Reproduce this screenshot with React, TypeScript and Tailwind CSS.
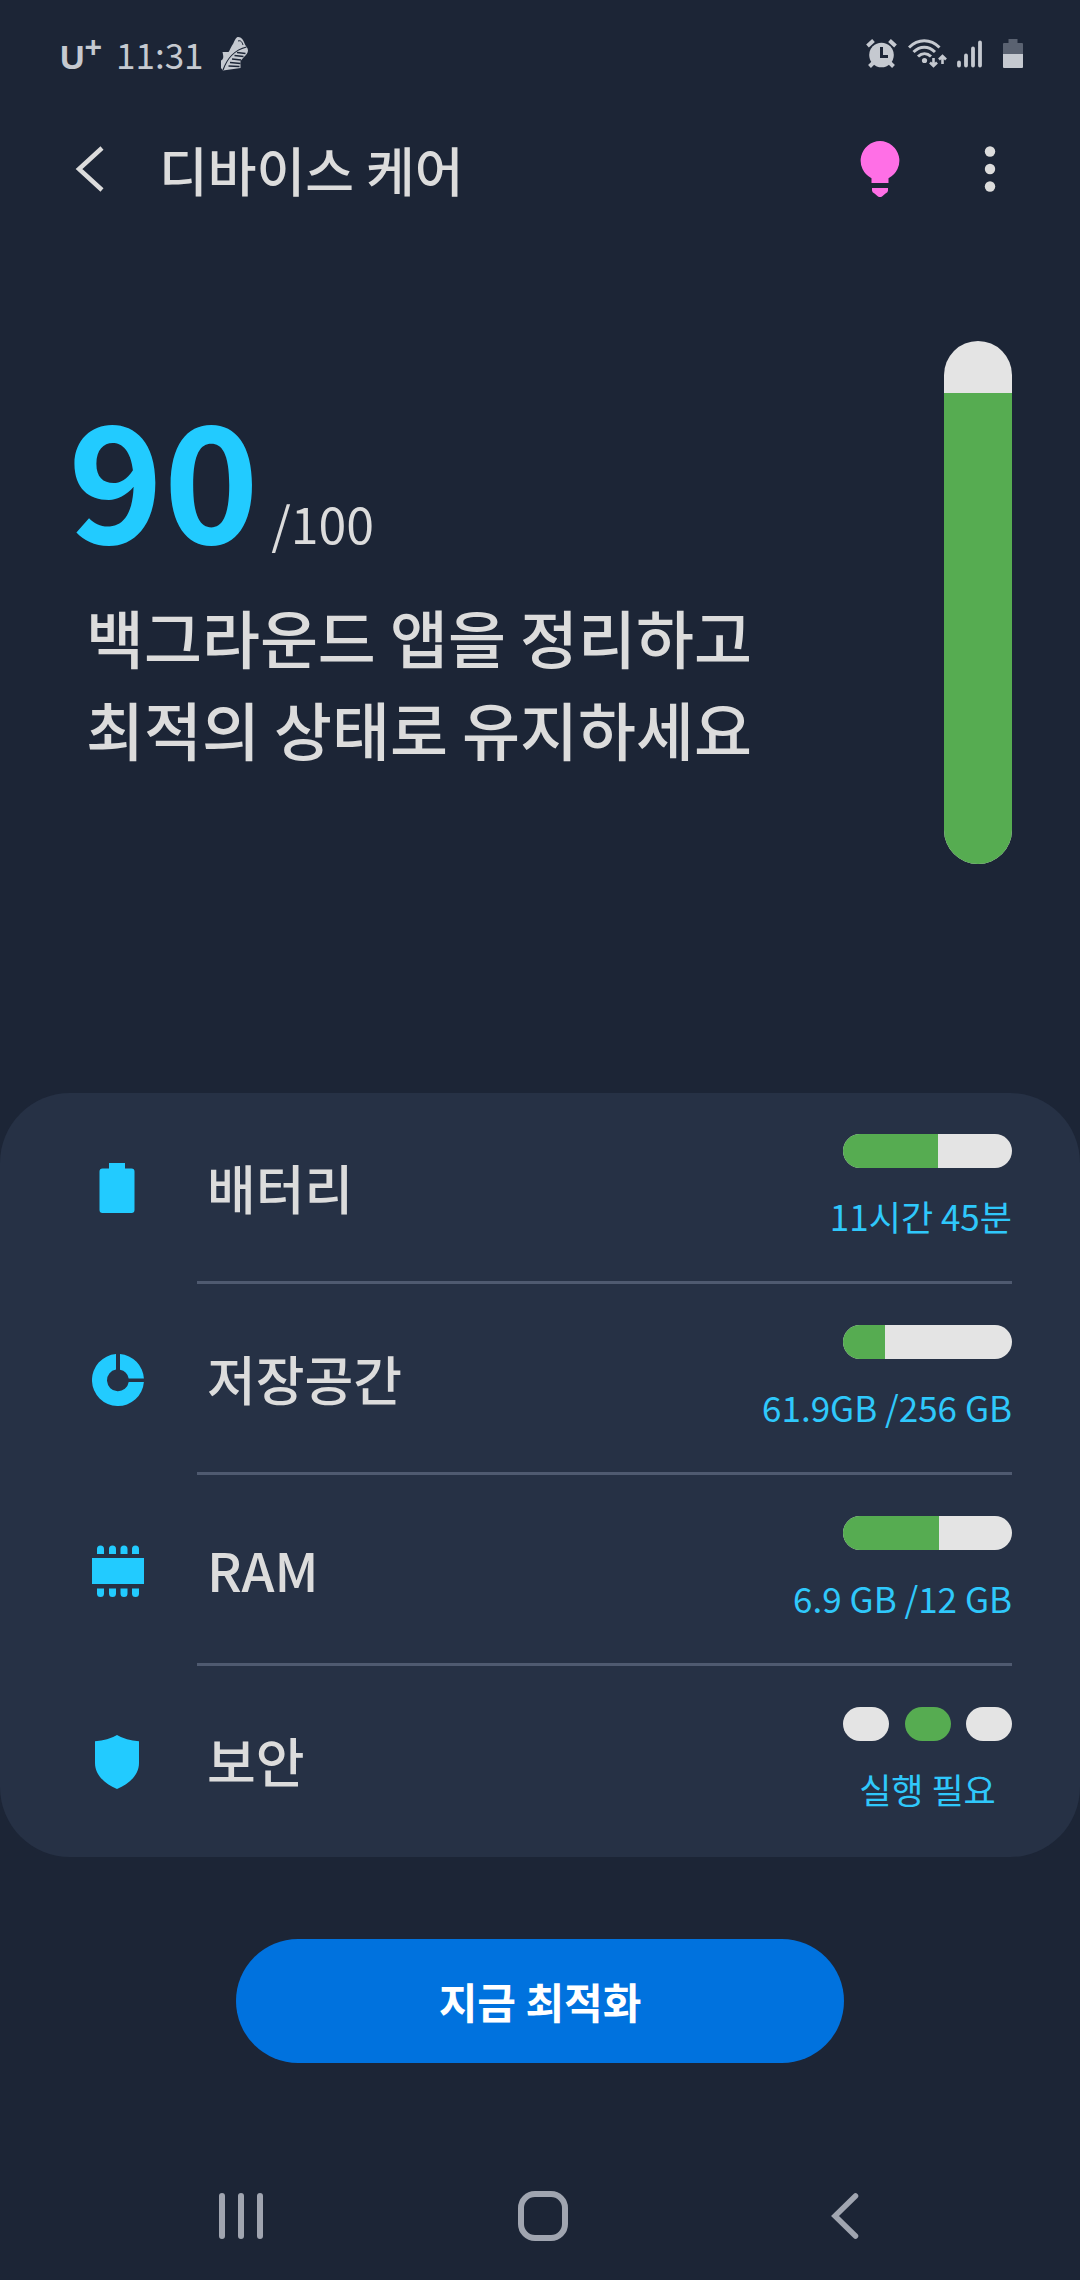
import React from 'react';

interface UsageBarProps {
  label: string;
  percent: number;
}

interface CareRowProps {
  icon: React.ReactNode;
  title: string;
  value: string;
  last?: boolean;
  children: React.ReactNode;
}

const AlarmIcon = () => (
  <svg width="32" height="30" viewBox="0 0 32 30" fill="none">
    <circle cx="15.5" cy="16" r="12.3" fill="#c5c9d0" />
    <path d="M1.5 7 7.5 1.5M29.5 7 23.5 1.5" stroke="#c5c9d0" strokeWidth="4" />
    <path d="m7 24-3.5 3.5M24 24l3.5 3.5" stroke="#c5c9d0" strokeWidth="4" />
    <path d="M15.5 8v9.5H22" stroke="#1c2536" strokeWidth="3" />
  </svg>
);

const WifiIcon = () => (
  <svg width="39" height="30" viewBox="0 0 39 30" fill="none" stroke="#c5c9d0" strokeWidth="3">
    <path d="M1 8.500C10 -.5 22.500 -.5 31.500 8.500" />
    <path d="M5.500 13C12 6.500 20.500 6.500 27 13" />
    <path d="M10 17.500c4-3.800 9-3.800 13 0" />
    <circle cx="16.500" cy="21.500" r="2.600" fill="#c5c9d0" stroke="none" />
    <path d="M25.500 19v8M22 23.500l3.500 3.500 3.500-3.500" strokeWidth="2.600" />
    <path d="M34.500 25v-8M31 20.500l3.500-3.500 3.500 3.500" strokeWidth="2.600" />
  </svg>
);

const SignalIcon = () => (
  <svg width="26" height="28" viewBox="0 0 26 28" stroke="#c5c9d0" strokeWidth="3.800" strokeLinecap="round">
    <path d="M2 22.500v3M9 15.500v10M16 8.500v17M23 2.500v23" />
  </svg>
);

const StatusBatteryIcon = () => (
  <svg width="20" height="30" viewBox="0 0 20 30">
    <path d="M5.500 0h9v4H19a1 1 0 0 1 1 1v10H0V5a1 1 0 0 1 1-1h4.500z" fill="#5a6271" />
    <path d="M0 15h20v13a1 1 0 0 1-1 1H1a1 1 0 0 1-1-1z" fill="#c5c9d0" />
  </svg>
);

const ShoeIcon = () => (
  <svg width="29" height="36" viewBox="0 0 29 36" fill="none">
    <path
      d="M17.500 1c3.500-.5 6 2.500 7.500 7.500 1 2 3 3.500 3 6 0 2.500-2 4.500-4 6.500l-3.500 4V32L3 34.500 1 32v-7.500c3-1.500 2.500-4 1.500-8.500h6c1-1 2-4 3.500-6.500C14 7 14.500 3 17.500 1z"
      fill="#c5c9d0"
    />
    <path d="M3 34C7 23 13 14.500 26.500 11" stroke="#1c2536" strokeWidth="1.200" />
    <path d="m17 16.500 8.500 1M14.500 19.500l9 1M12 23l9 1M10 26.500l10.500 1M8.500 30l11 .5" stroke="#1c2536" strokeWidth="1.300" />
    <path d="M18 5c3-1 4 1 5 4" stroke="#1c2536" strokeWidth="1" />
  </svg>
);

const BulbIcon = () => (
  <svg width="40" height="57" viewBox="0 0 40 57" fill="#ff6fe6">
    <path d="M20 0a19.700 19.700 0 0 1 8.500 37.300V42h-17v-4.700A19.700 19.700 0 0 1 20 0z" />
    <path d="M12 47h16v2.500q0 2-2.500 3L22 55.500q-2 1.200-4 0l-3.500-3Q12 51.500 12 49.500z" />
  </svg>
);

const MoreIcon = () => (
  <svg width="12" height="46" viewBox="0 0 12 46" fill="#dcdcdc">
    <circle cx="6" cy="5.500" r="5.200" />
    <circle cx="6" cy="23" r="5.200" />
    <circle cx="6" cy="40.500" r="5.200" />
  </svg>
);

const BatteryIcon = () => (
  <svg width="52" height="54" viewBox="0 0 52 54" fill="#22cbff">
    <path d="M17 1h16v5.500h6.500a3 3 0 0 1 3 3V48a3 3 0 0 1-3 3h-29a3 3 0 0 1-3-3V9.500a3 3 0 0 1 3-3H17z" />
  </svg>
);

const StorageIcon = () => (
  <svg width="52" height="54" viewBox="0 0 52 54" fill="#22cbff">
    <path d="M24 1.100V16.600A10.900 10.900 0 1 0 36.700 29H51.900A26 26 0 1 1 24 1.100z" />
    <path d="M28 1.100A26 26 0 0 1 51.900 25.500H36.700A11 11 0 0 0 28 16.800z" />
  </svg>
);

const RamIcon = () => (
  <svg width="52" height="54" viewBox="0 0 52 54" fill="#22cbff">
    <path d="M0 14h52v26H0z" />
    <path d="M5 10V5a3.500 3.500 0 0 1 7 0v5zM17 10V5a3.500 3.500 0 0 1 7 0v5zM28.500 10V5a3.500 3.500 0 0 1 7 0v5zM40 10V5a3.500 3.500 0 0 1 7 0v5z" />
    <path d="M5 44.500v5a3.500 3.500 0 0 0 7 0v-5zM17 44.500v5a3.500 3.500 0 0 0 7 0v-5zM28.500 44.500v5a3.500 3.500 0 0 0 7 0v-5zM40 44.500v5a3.500 3.500 0 0 0 7 0v-5z" />
  </svg>
);

const ShieldIcon = () => (
  <svg width="52" height="54" viewBox="0 0 52 54" fill="#22cbff">
    <path d="M25 0Q34 5.500 47 6.300V28C47 39.500 37.500 49 25 54 12.500 49 3 39.500 3 28V6.300Q16 5.500 25 0z" />
  </svg>
);

const UsageBar: React.FC<UsageBarProps> = ({ label, percent }) => (
  <div
    role="progressbar"
    aria-label={label}
    aria-valuenow={percent}
    className="h-[34px] w-full overflow-hidden rounded-full bg-[#e4e4e4]"
  >
    <div className="h-full bg-[#56ac51]" style={{ width: `${percent}%` }}></div>
  </div>
);

const CareRow: React.FC<CareRowProps> = ({ icon, title, value, last = false, children }) => (
  <li>
    <button type="button" className="flex w-full items-center gap-[53px] pr-[68px] pl-[92px] text-left">
      <span className="shrink-0">{icon}</span>
      <span
        className={`flex grow items-center justify-between border-b-3 pl-[10px] ${
          last ? 'border-transparent' : 'border-[#4f5a70]'
        }`}
      >
        <span className="text-[53px] leading-[72px] font-medium text-[#dcdcdc]">{title}</span>
        <span className="flex w-[169px] flex-col gap-[26px] pt-[41px] pb-[43px]">
          {children}
          <span
            className={`flex text-[35px] leading-[44px] whitespace-nowrap text-[#2fc8fb] ${
              last ? 'justify-center' : 'justify-end'
            }`}
          >
            {value}
          </span>
        </span>
      </span>
    </button>
  </li>
);

const App: React.FC = () => {
  return (
    <div className="flex min-h-screen flex-col bg-[#1c2536] font-['Noto_Sans_CJK_KR',sans-serif]">
      <div className="flex h-[108px] items-center justify-between pr-[57px] pl-[60px] text-[#c5c9d0]">
        <div className="flex items-center">
          <span className="flex items-start font-['Liberation_Sans',sans-serif] font-bold">
            <span className="pt-[6px] text-[34px] leading-[36px]">U</span>
            <span className="text-[30px] leading-[28px]">+</span>
          </span>
          <span className="ml-[14px] text-[35px] leading-[40px]">11:31</span>
          <span className="ml-4">
            <ShoeIcon />
          </span>
        </div>
        <div className="flex items-center">
          <AlarmIcon />
          <span className="ml-[10px]">
            <WifiIcon />
          </span>
          <span className="ml-[10px]">
            <SignalIcon />
          </span>
          <span className="ml-5">
            <StatusBatteryIcon />
          </span>
        </div>
      </div>

      <header className="flex h-[122px] items-center justify-between pr-[84px] pl-[74px]">
        <div className="flex items-center gap-[53px]">
          <button type="button" aria-label="뒤로">
            <svg width="32" height="48" viewBox="0 0 32 48" fill="none" stroke="#dcdcdc" strokeWidth="4.500">
              <path d="M28 3 5 24l23 21" />
            </svg>
          </button>
          <h1 className="text-[53px] leading-[72px] font-medium text-[#dcdcdc]">디바이스 케어</h1>
        </div>
        <div className="flex items-center gap-[84px]">
          <button type="button" aria-label="도움말">
            <BulbIcon />
          </button>
          <button type="button" aria-label="더보기">
            <MoreIcon />
          </button>
        </div>
      </header>

      <main>
        <section className="flex justify-between px-[68px] pt-[111px] pb-[229px]">
          <div className="pt-[49px]">
            <div className="flex items-baseline gap-3">
              <span className="text-[162px] leading-[168px] font-bold text-[#22cbff]">90</span>
              <span className="text-[50px] text-[#dcdcdc]">/100</span>
            </div>
            <p className="mt-[30px] pl-[18px] text-[63px] leading-[92px] font-medium text-[#dcdcdc]">
              백그라운드 앱을 정리하고
              <br />
              최적의 상태로 유지하세요
            </p>
          </div>
          <div
            role="progressbar"
            aria-label="점수"
            aria-valuenow={90}
            className="flex h-[523px] w-[68px] shrink-0 flex-col justify-end overflow-hidden rounded-full bg-[#e4e4e4]"
          >
            <div className="bg-[#56ac51]" style={{ height: '90%' }}></div>
          </div>
        </section>

        <ul className="rounded-[70px] bg-[#263145]">
          <CareRow icon={<BatteryIcon />} title="배터리" value="11시간 45분">
            <UsageBar label="배터리" percent={56} />
          </CareRow>
          <CareRow icon={<StorageIcon />} title="저장공간" value="61.9GB /256 GB">
            <UsageBar label="저장공간" percent={25} />
          </CareRow>
          <CareRow icon={<RamIcon />} title="RAM" value="6.9 GB /12 GB">
            <UsageBar label="RAM" percent={57} />
          </CareRow>
          <CareRow icon={<ShieldIcon />} title="보안" value="실행 필요" last>
            <span className="flex h-[34px] justify-between">
              <span className="w-[46px] rounded-full bg-[#e4e4e4]"></span>
              <span className="w-[46px] rounded-full bg-[#56ac51]"></span>
              <span className="w-[46px] rounded-full bg-[#e4e4e4]"></span>
            </span>
          </CareRow>
        </ul>

        <div className="mt-[82px] flex justify-center">
          <button
            type="button"
            className="rounded-full bg-[#0072de] px-[203px] py-8 text-[42px] leading-[60px] font-bold text-white"
          >
            지금 최적화
          </button>
        </div>
      </main>

      <nav className="mt-auto flex h-32 items-center pr-[84px] pl-[90px]">
        <button type="button" aria-label="최근 앱" className="flex flex-1 justify-center">
          <svg width="46" height="48" viewBox="0 0 46 48" stroke="#a0a5b0" strokeWidth="6" strokeLinecap="round">
            <path d="M4 4v40M23 4v40M42 4v40" />
          </svg>
        </button>
        <button type="button" aria-label="홈" className="flex flex-1 justify-center">
          <svg width="50" height="50" viewBox="0 0 50 50" fill="none" stroke="#a0a5b0" strokeWidth="6">
            <rect x="3" y="3" width="44" height="44" rx="14" />
          </svg>
        </button>
        <button type="button" aria-label="이전" className="flex flex-1 justify-center">
          <svg
            width="28"
            height="48"
            viewBox="0 0 28 48"
            fill="none"
            stroke="#a0a5b0"
            strokeWidth="5.500"
            strokeLinecap="round"
          >
            <path d="M24.500 4 4 24l20.500 20" />
          </svg>
        </button>
      </nav>
    </div>
  );
};

export default App;
